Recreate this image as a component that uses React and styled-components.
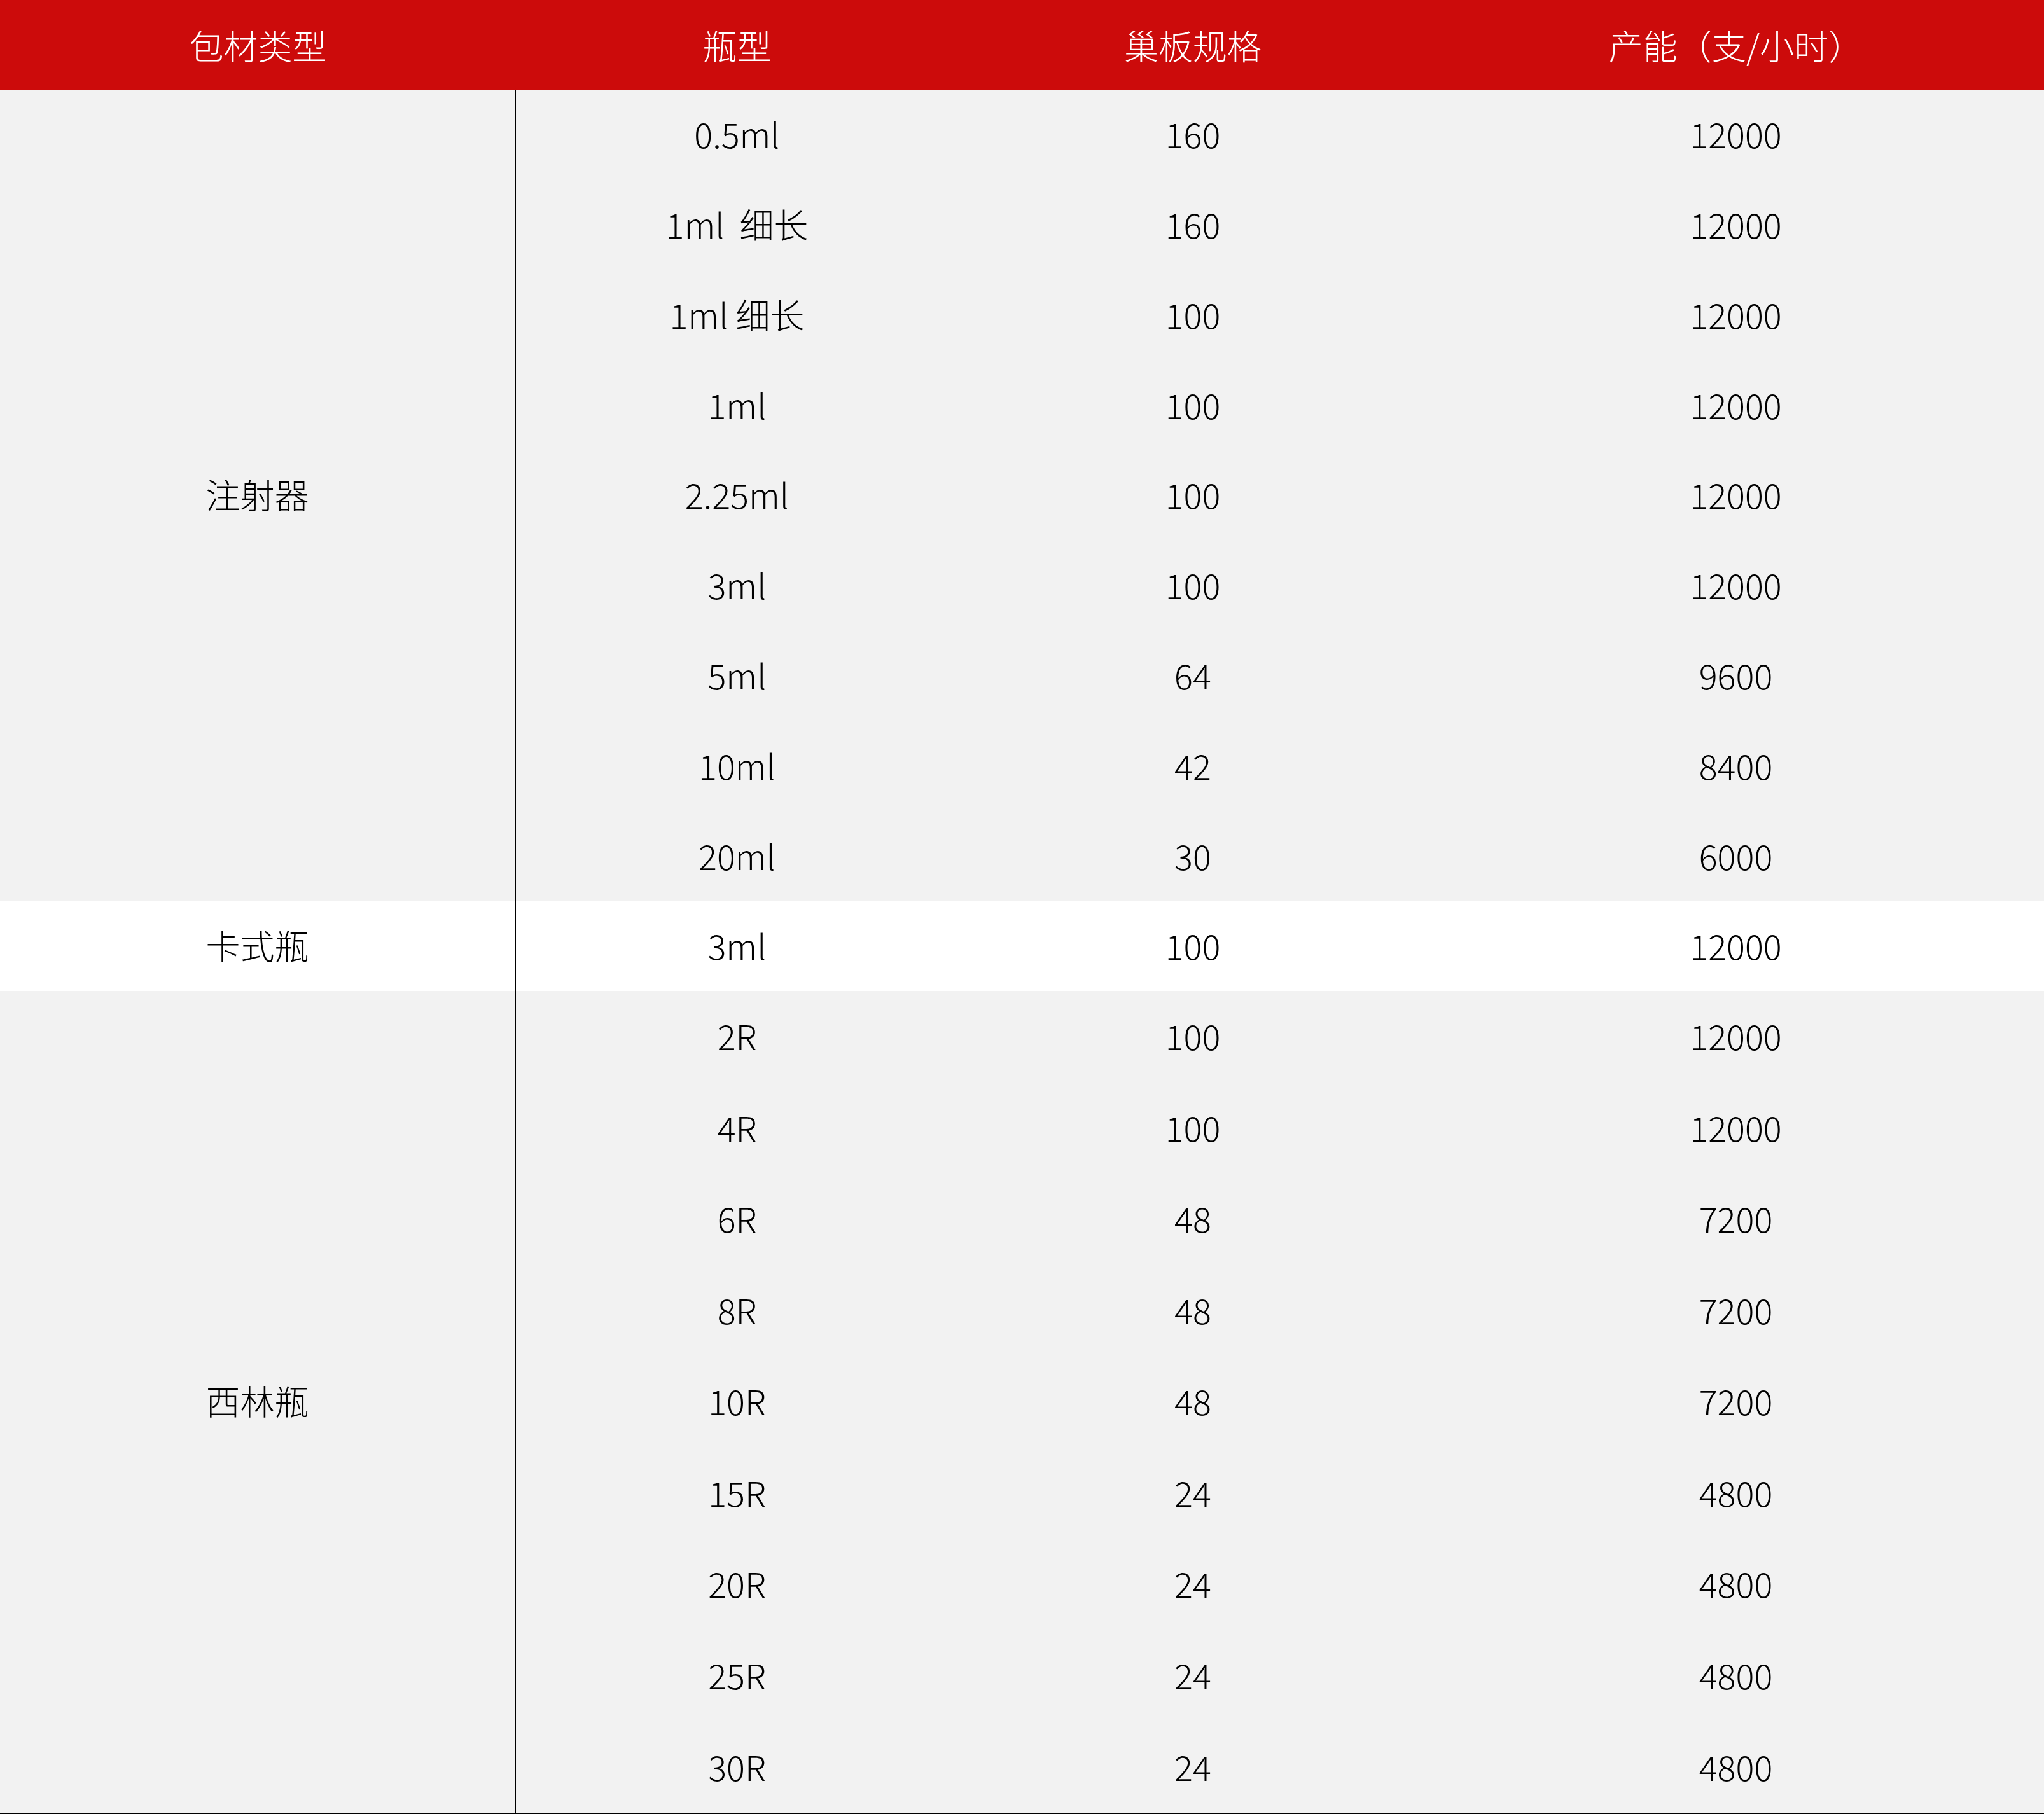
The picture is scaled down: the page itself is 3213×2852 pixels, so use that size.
import React from "react";
import styled, { createGlobalStyle } from "styled-components";

const GlobalStyle = createGlobalStyle`
  html, body { margin: 0; padding: 0; background: #ffffff; }
  body {
    font-family: "Noto Sans CJK SC", "Noto Sans", sans-serif;
    font-weight: 300;
  }
`;

const COLS = "811px 695px 738px 1fr";

const Table = styled.div`
  width: 3213px;
  display: flex;
  flex-direction: column;
  border-bottom: 2px solid #000;
  font-family: "Noto Sans CJK SC", "Noto Sans", sans-serif;
  font-weight: 300;
  font-size: 54px;
  color: #000;
`;

const HeaderRow = styled.div`
  display: grid;
  grid-template-columns: ${COLS};
  height: 141px;
  background: #cc0b0b;
  color: #ffffff;
`;

const HeadCell = styled.div`
  display: flex;
  align-items: center;
  justify-content: center;
  white-space: pre;
`;

const Group = styled.div`
  display: grid;
  grid-template-columns: 811px 1fr;
  background: ${(p) => (p.$white ? "#ffffff" : "#f2f2f2")};
`;

const GroupLabel = styled.div`
  display: flex;
  align-items: center;
  justify-content: center;
  border-right: 2px solid #000;
  padding-bottom: 4px;
`;

const Rows = styled.div`
  display: flex;
  flex-direction: column;
`;

const Row = styled.div`
  display: grid;
  grid-template-columns: 695px 738px 1fr;
  height: ${(p) => p.$h}px;
`;

const Cell = styled.div`
  display: flex;
  align-items: center;
  justify-content: center;
  white-space: pre;
  padding-bottom: 4px;
`;

const groups = [
  {
    label: "注射器",
    h: 1276 / 9,
    rows: [
      ["0.5ml", "160", "12000"],
      ["1ml\u00a0\u00a0细长", "160", "12000"],
      ["1ml 细长", "100", "12000"],
      ["1ml", "100", "12000"],
      ["2.25ml", "100", "12000"],
      ["3ml", "100", "12000"],
      ["5ml", "64", "9600"],
      ["10ml", "42", "8400"],
      ["20ml", "30", "6000"],
    ],
  },
  {
    label: "卡式瓶",
    white: true,
    h: 141,
    rows: [["3ml", "100", "12000"]],
  },
  {
    label: "西林瓶",
    h: 1292 / 9,
    rows: [
      ["2R", "100", "12000"],
      ["4R", "100", "12000"],
      ["6R", "48", "7200"],
      ["8R", "48", "7200"],
      ["10R", "48", "7200"],
      ["15R", "24", "4800"],
      ["20R", "24", "4800"],
      ["25R", "24", "4800"],
      ["30R", "24", "4800"],
    ],
  },
];

export default function App() {
  return (
    <>
      <GlobalStyle />
      <Table>
        <HeaderRow>
          <HeadCell>包材类型</HeadCell>
          <HeadCell>瓶型</HeadCell>
          <HeadCell>巢板规格</HeadCell>
          <HeadCell>产能（支/小时）</HeadCell>
        </HeaderRow>
        {groups.map((g) => (
          <Group key={g.label} $white={g.white}>
            <GroupLabel>{g.label}</GroupLabel>
            <Rows>
              {g.rows.map((r, i) => (
                <Row key={i} $h={g.h}>
                  <Cell>{r[0]}</Cell>
                  <Cell>{r[1]}</Cell>
                  <Cell>{r[2]}</Cell>
                </Row>
              ))}
            </Rows>
          </Group>
        ))}
      </Table>
    </>
  );
}
